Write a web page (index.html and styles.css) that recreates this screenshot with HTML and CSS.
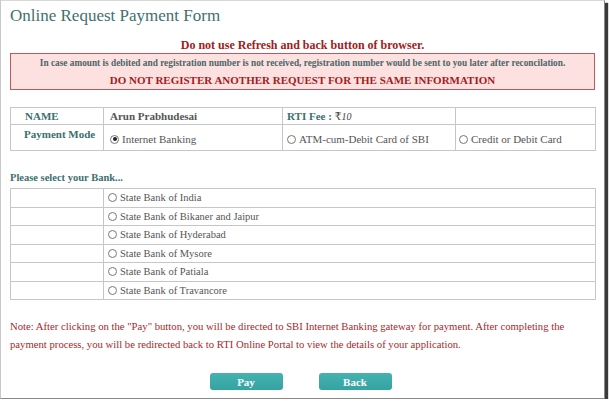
FILE: index.html
```html
<!DOCTYPE html>
<html>
<head>
<meta charset="utf-8">
<link rel="stylesheet" href="styles.css">
</head>
<body>
<div class="page">
  <h1 class="title">Online Request Payment Form</h1>
  <p class="warn">Do not use Refresh and back button of browser.</p>
  <div class="alert">
    <p class="alert-small">In case amount is debited and registration number is not received, registration number would be sent to you later after reconcilation.</p>
    <p class="alert-big">DO NOT REGISTER ANOTHER REQUEST FOR THE SAME INFORMATION</p>
  </div>
  <table class="info">
    <tr class="r1">
      <td class="c1 lbl">NAME</td>
      <td class="c2 val">Arun Prabhudesai</td>
      <td class="c3"><span class="lbl">RTI Fee :</span> <span class="fee">₹<i>10</i></span></td>
      <td class="c4"></td>
    </tr>
    <tr class="r2">
      <td class="c1 lbl">Payment Mode</td>
      <td class="c2"><span class="radio on"></span>Internet Banking</td>
      <td class="c3"><span class="radio"></span>ATM-cum-Debit Card of SBI</td>
      <td class="c4"><span class="radio"></span>Credit or Debit Card</td>
    </tr>
  </table>
  <p class="select">Please select your Bank...</p>
  <table class="banks">
    <tr><td class="b1"></td><td class="b2"><span class="radio"></span>State Bank of India</td></tr>
    <tr><td class="b1"></td><td class="b2"><span class="radio"></span>State Bank of Bikaner and Jaipur</td></tr>
    <tr><td class="b1"></td><td class="b2"><span class="radio"></span>State Bank of Hyderabad</td></tr>
    <tr><td class="b1"></td><td class="b2"><span class="radio"></span>State Bank of Mysore</td></tr>
    <tr><td class="b1"></td><td class="b2"><span class="radio"></span>State Bank of Patiala</td></tr>
    <tr><td class="b1"></td><td class="b2"><span class="radio"></span>State Bank of Travancore</td></tr>
  </table>
  <p class="note">Note: After clicking on the "Pay" button, you will be directed to SBI Internet Banking gateway for payment. After completing the<br>payment process, you will be redirected back to RTI Online Portal to view the details of your application.</p>
  <div class="buttons">
    <button class="btn">Pay</button>
    <button class="btn">Back</button>
  </div>
</div>
</body>
</html>
```
FILE: styles.css
```css
html, body { margin: 0; padding: 0; background: #fff; }
body { font-family: "Liberation Serif", "DejaVu Serif", serif; }
.page {
  box-sizing: border-box;
  width: 605px;
  height: 399px;
  border-left: 1px solid #c8c8c8;
  border-top: 1px solid #d8d8d8;
  border-right: 1px solid #888;
  border-bottom: 1px solid #888;
  box-shadow: 3px 3px 1px #3a3a3a;
  padding: 0 9px 0 9px;
  position: relative;
}
.title {
  margin: 0;
  padding-top: 4px;
  font-size: 17px;
  font-weight: normal;
  color: #41706f;
  line-height: 22px;
}
.warn {
  margin: 11px 0 0;
  text-align: center;
  font-weight: bold;
  font-size: 12px;
  line-height: 14px;
  color: #a02020;
}
.alert {
  margin: 1px 0 0;
  border: 1px solid #c0575d;
  background: #fde1e1;
  height: 37px;
  box-sizing: border-box;
  text-align: center;
}
.alert-small {
  margin: 3px 0 0;
  font-size: 9.3px;
  font-weight: bold;
  color: #4c6666;
  line-height: 12px;
}
.alert-big {
  margin: 4px 0 0;
  font-size: 11px;
  font-weight: bold;
  color: #a51c1c;
  line-height: 14px;
}
table { border-collapse: collapse; }
.info {
  margin-top: 17px;
  width: 586px;
  font-size: 11px;
  table-layout: fixed;
}
.info td {
  border: 1px solid #c6c6c6;
  padding: 0 0 0 6px;
  color: #555;
  vertical-align: middle;
  white-space: nowrap;
  box-sizing: border-box;
}
.info .r1 td { height: 17px; }
.info .r2 td { height: 26px; }
.info .c1 { width: 93px; padding-left: 14px; }
.info .c2 { width: 179px; }
.info .c3 { width: 173px; padding-left: 4px; }
.info .c4 { padding-left: 3px; }
.info .r2 .c1 { vertical-align: top; padding-top: 3px; padding-left: 13px; }
.info .r2 .c2, .info .r2 .c3, .info .r2 .c4 { padding-top: 2px; }
.lbl { font-weight: bold; color: #3a7070; }
.info td.lbl { color: #3a7070; }
.val { font-weight: bold; color: #555 !important; }
.fee { color: #444; }
.fee i { font-size: 10px; }
.select {
  margin: 20px 0 0;
  font-size: 10.5px;
  font-weight: bold;
  color: #3a7070;
  line-height: 14px;
}
.banks {
  margin-top: 3px;
  width: 586px;
  font-size: 10.5px;
}
.banks td {
  border: 1px solid #c6c6c6;
  height: 18.5px;
  padding: 0;
  color: #555;
  box-sizing: border-box;
}
.banks .b1 { width: 93px; }
.banks .b2 { padding-left: 4px; }
.radio {
  display: inline-block;
  box-sizing: border-box;
  width: 9px;
  height: 9px;
  border: 1px solid #777;
  border-radius: 50%;
  margin-right: 3px;
  vertical-align: -1px;
  background: #fff;
  position: relative;
}
.radio.on::after {
  content: "";
  position: absolute;
  left: 1.5px; top: 1.5px;
  width: 4px; height: 4px;
  border-radius: 50%;
  background: #222;
}
.note {
  margin: 17px -4px 0 0;
  font-size: 10.7px;
  line-height: 18px;
  color: #a8282a;
}
.buttons {
  margin-top: 20px;
  display: flex;
  justify-content: center;
  gap: 36px;
  padding-right: 4px;
}
.btn {
  width: 73px;
  height: 17px;
  border: none;
  border-radius: 3px;
  background: linear-gradient(#45b2b0, #34a3a1);
  color: #fff;
  font-family: "Liberation Serif", serif;
  font-weight: bold;
  font-size: 11px;
  padding: 0;
}
```
